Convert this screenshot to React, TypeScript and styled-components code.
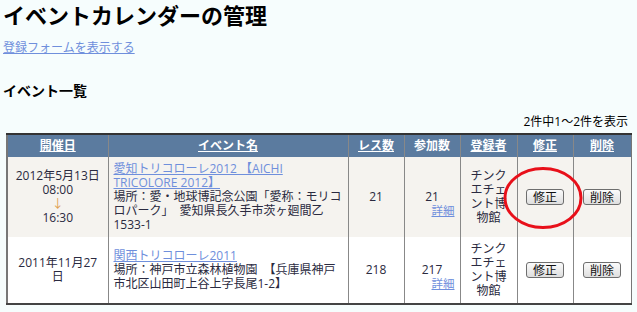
import React from "react";
import styled, { createGlobalStyle } from "styled-components";

const Global = createGlobalStyle`
  html, body { margin: 0; padding: 0; background: #f6fdfd; }
  body {
    font-family: "Open Sans", "Noto Sans CJK JP", sans-serif;
    font-size: 12px;
    color: #2a2a40;
  }
`;

const Page = styled.div`
  padding: 0 3px;
`;

const Title = styled.h1`
  margin: 0;
  font-family: "Noto Sans CJK JP", sans-serif;
  font-size: 22px;
  line-height: 29px;
  font-weight: bold;
  color: #000;
`;

const FormLink = styled.a`
  display: block;
  margin-top: 11px;
  font-size: 12px;
  line-height: 16px;
  color: #6f8fdc;
  text-decoration: underline;
  width: max-content;
`;

const SectionTitle = styled.h2`
  margin: 25px 0 0;
  font-family: "Noto Sans CJK JP", sans-serif;
  font-size: 14px;
  line-height: 18px;
  font-weight: bold;
  color: #000;
`;

const Count = styled.div`
  margin-top: 15px;
  text-align: right;
  line-height: 16px;
  color: #000;
  padding-right: 6px;
`;

const TableWrap = styled.div`
  position: relative;
  margin-top: 3px;
  margin-left: 3px;
  width: 624px;
`;

const Table = styled.table`
  width: 624px;
  table-layout: fixed;
  border-collapse: collapse;
  border-top: 2px solid #333;
  border-left: 2px solid #777;
  border-right: 1px solid #777;
  border-bottom: 2px solid #444;
`;

const Th = styled.th`
  background: #5b7b9f;
  color: #fff;
  font-weight: bold;
  font-size: 12px;
  line-height: 14px;
  padding: 4px 3px;
  border-left: 1px solid #888;
  text-align: center;
`;

const HeadLink = styled.a`
  color: #fff;
  text-decoration: underline;
`;

const Tr = styled.tr<{ $alt?: boolean }>`
  background: ${(p) => (p.$alt ? "#f5f3ef" : "#ffffff")};
`;

const Td = styled.td<{ $left?: boolean }>`
  border-left: 1px solid #888;
  padding: 5px;
  line-height: 14px;
  font-size: 12px;
  vertical-align: middle;
  text-align: ${(p) => (p.$left ? "left" : "center")};
  overflow-wrap: anywhere;
`;

const Arrow = styled.div`
  color: #e0a050;
`;

const EventLink = styled.a`
  color: #6f8fdc;
  text-decoration: underline;
`;

const Detail = styled.a`
  display: block;
  margin-bottom: -14px;
  text-align: right;
  font-size: 11.5px;
  color: #6f8fdc;
  text-decoration: underline;
`;

const Btn = styled.button`
  font-family: "Noto Sans CJK JP", sans-serif;
  font-size: 12px;
  line-height: 14px;
  height: 16px;
  padding: 0 6px;
  color: #111;
  background: linear-gradient(#fbfbfb, #dedede);
  border: 1px solid #6e6e6e;
  border-radius: 3px;
  box-sizing: border-box;
  cursor: pointer;
`;

const Circle = styled.svg`
  position: absolute;
  left: 496px;
  top: 33px;
  pointer-events: none;
`;

type Row = {
  date: React.ReactNode;
  name: string;
  place: string;
  res: number;
  join: number;
  owner: string;
};

const rows: Row[] = [
  {
    date: (
      <>
        2012年5月13日
        <br />
        08:00
        <Arrow>↓</Arrow>
        16:30
      </>
    ),
    name: "愛知トリコローレ2012 【AICHI TRICOLORE 2012】",
    place: "場所：愛・地球博記念公園「愛称：モリコロパーク」　愛知県長久手市茨ヶ廻間乙1533-1",
    res: 21,
    join: 21,
    owner: "チンクエチェント博物館",
  },
  {
    date: <>2011年11月27日</>,
    name: "関西トリコローレ2011",
    place: "場所：神戸市立森林植物園　【兵庫県神戸市北区山田町上谷上字長尾1-2】",
    res: 218,
    join: 217,
    owner: "チンクエチェント博物館",
  },
];

export default function App() {
  return (
    <Page>
      <Global />
      <Title>イベントカレンダーの管理</Title>
      <FormLink href="#">登録フォームを表示する</FormLink>
      <SectionTitle>イベント一覧</SectionTitle>
      <Count>2件中1～2件を表示</Count>
      <TableWrap>
        <Table>
          <colgroup>
            <col style={{ width: 101 }} />
            <col style={{ width: 240 }} />
            <col style={{ width: 56 }} />
            <col style={{ width: 56 }} />
            <col style={{ width: 57 }} />
            <col style={{ width: 56 }} />
            <col style={{ width: 58 }} />
          </colgroup>
          <thead>
            <tr>
              <Th><HeadLink href="#">開催日</HeadLink></Th>
              <Th><HeadLink href="#">イベント名</HeadLink></Th>
              <Th><HeadLink href="#">レス数</HeadLink></Th>
              <Th>参加数</Th>
              <Th><HeadLink href="#">登録者</HeadLink></Th>
              <Th><HeadLink href="#">修正</HeadLink></Th>
              <Th><HeadLink href="#">削除</HeadLink></Th>
            </tr>
          </thead>
          <tbody>
            {rows.map((r, i) => (
              <Tr key={i} $alt={i === 0}>
                <Td>{r.date}</Td>
                <Td $left>
                  <EventLink href="#">{r.name}</EventLink>
                  <br />
                  {r.place}
                </Td>
                <Td>{r.res}</Td>
                <Td>
                  <div>{r.join}</div>
                  <Detail href="#">詳細</Detail>
                </Td>
                <Td>{r.owner}</Td>
                <Td><Btn>修正</Btn></Td>
                <Td><Btn>削除</Btn></Td>
              </Tr>
            ))}
          </tbody>
        </Table>
        <Circle width="82" height="64" viewBox="0 0 82 64">
          <ellipse cx="41" cy="32" rx="38" ry="29.5" fill="none" stroke="#e8101a" strokeWidth="3" />
        </Circle>
      </TableWrap>
    </Page>
  );
}
